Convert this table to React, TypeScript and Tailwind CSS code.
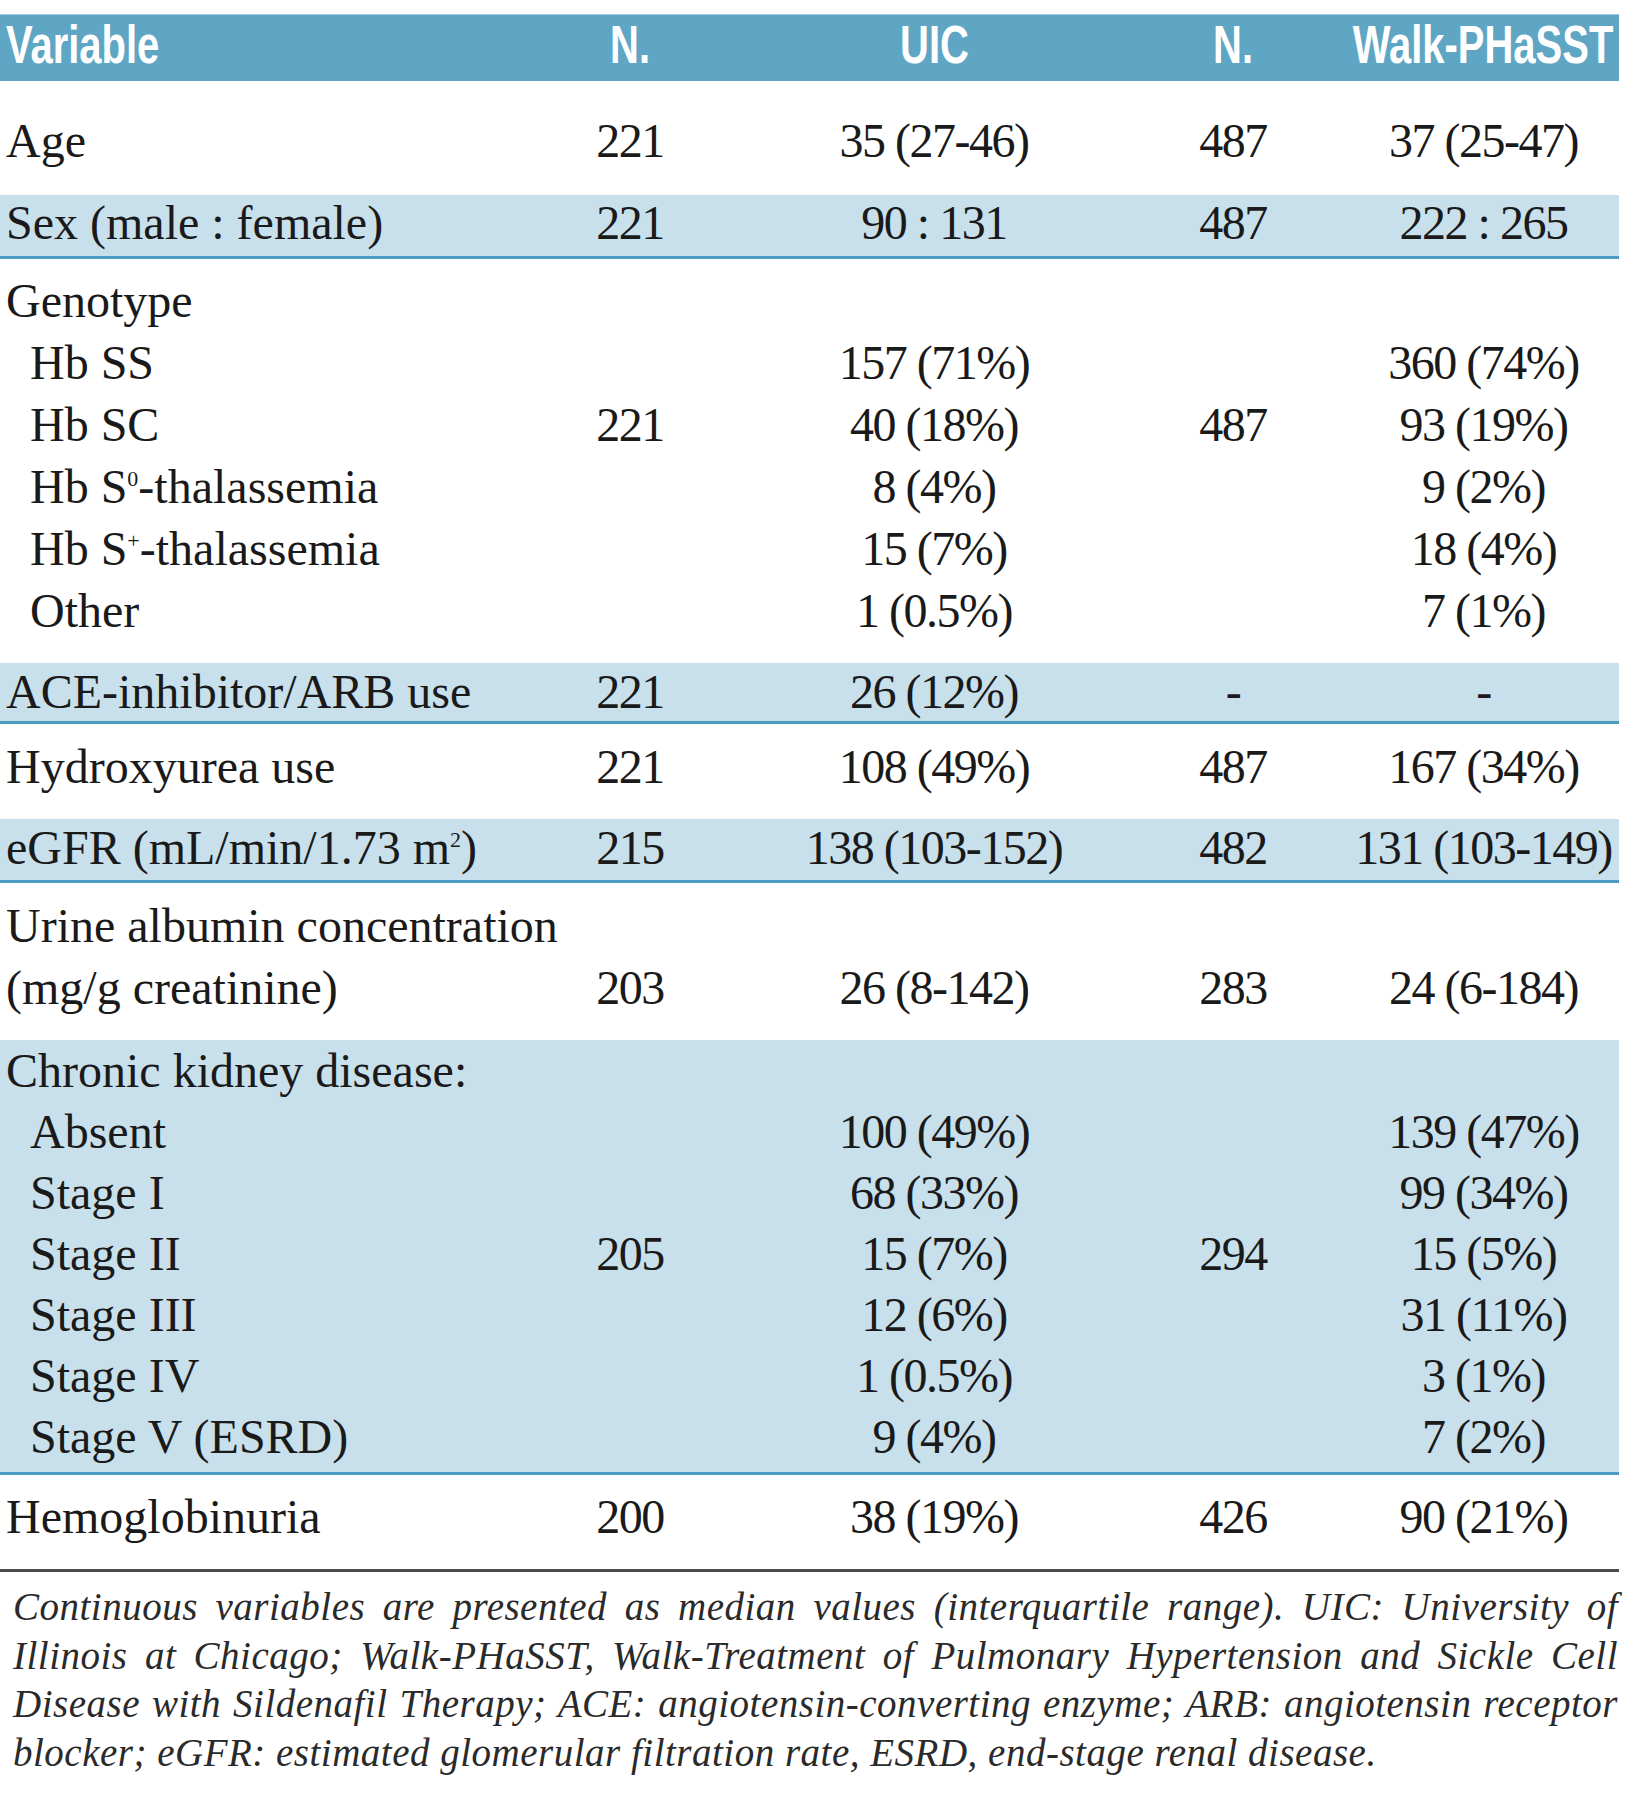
import type { ReactNode } from "react";

type Line = {
  label?: ReactNode;
  sub?: boolean;
  n1?: string;
  uic?: string;
  n2?: string;
  walk?: string;
};

type Block = {
  lines: Line[];
  shaded?: boolean;
  pad: string;
  lineH: string;
};

const Sup = ({ children }: { children: ReactNode }) => (
  <sup className="text-[22px] top-[-17px]">{children}</sup>
);

const blocks: Block[] = [
  {
    pad: "pt-[29px] pb-[23px]",
    lineH: "h-[62px]",
    lines: [{ label: "Age", n1: "221", uic: "35 (27-46)", n2: "487", walk: "37 (25-47)" }],
  },
  {
    shaded: true,
    pad: "pb-[5px]",
    lineH: "h-[56px]",
    lines: [{ label: "Sex (male : female)", n1: "221", uic: "90 : 131", n2: "487", walk: "222 : 265" }],
  },
  {
    pad: "pt-[11px] pb-[21px]",
    lineH: "h-[62px]",
    lines: [
      { label: "Genotype" },
      { label: "Hb SS", sub: true, uic: "157 (71%)", walk: "360 (74%)" },
      { label: "Hb SC", sub: true, n1: "221", uic: "40 (18%)", n2: "487", walk: "93 (19%)" },
      {
        label: (
          <>
            Hb S<Sup>0</Sup>-thalassemia
          </>
        ),
        sub: true,
        uic: "8 (4%)",
        walk: "9 (2%)",
      },
      {
        label: (
          <>
            Hb S<Sup>+</Sup>-thalassemia
          </>
        ),
        sub: true,
        uic: "15 (7%)",
        walk: "18 (4%)",
      },
      { label: "Other", sub: true, uic: "1 (0.5%)", walk: "7 (1%)" },
    ],
  },
  {
    shaded: true,
    pad: "",
    lineH: "h-[58px]",
    lines: [{ label: "ACE-inhibitor/ARB use", n1: "221", uic: "26 (12%)", n2: "-", walk: "-" }],
  },
  {
    pad: "pt-[12px] pb-[21px]",
    lineH: "h-[62px]",
    lines: [{ label: "Hydroxyurea use", n1: "221", uic: "108 (49%)", n2: "487", walk: "167 (34%)" }],
  },
  {
    shaded: true,
    pad: "pt-[1px] pb-[4px]",
    lineH: "h-[56px]",
    lines: [
      {
        label: (
          <>
            eGFR (mL/min/1.73 m<Sup>2</Sup>)
          </>
        ),
        n1: "215",
        uic: "138 (103-152)",
        n2: "482",
        walk: "131 (103-149)",
      },
    ],
  },
  {
    pad: "pt-[12px] pb-[21px]",
    lineH: "h-[62px]",
    lines: [
      { label: "Urine albumin concentration" },
      { label: "(mg/g creatinine)", n1: "203", uic: "26 (8-142)", n2: "283", walk: "24 (6-184)" },
    ],
  },
  {
    shaded: true,
    pad: "pb-[5px]",
    lineH: "h-[61px]",
    lines: [
      { label: "Chronic kidney disease:" },
      { label: "Absent", sub: true, uic: "100 (49%)", walk: "139 (47%)" },
      { label: "Stage I", sub: true, uic: "68 (33%)", walk: "99 (34%)" },
      { label: "Stage II", sub: true, n1: "205", uic: "15 (7%)", n2: "294", walk: "15 (5%)" },
      { label: "Stage III", sub: true, uic: "12 (6%)", walk: "31 (11%)" },
      { label: "Stage IV", sub: true, uic: "1 (0.5%)", walk: "3 (1%)" },
      { label: "Stage V (ESRD)", sub: true, uic: "9 (4%)", walk: "7 (2%)" },
    ],
  },
  {
    pad: "pt-[11px] pb-[21px]",
    lineH: "h-[62px]",
    lines: [{ label: "Hemoglobinuria", n1: "200", uic: "38 (19%)", n2: "426", walk: "90 (21%)" }],
  },
];

const cols = "grid grid-cols-[510px_240px_368px_230px_271px] items-center";

const footnote = [
  "Continuous variables are presented as median values (interquartile range). UIC: University of",
  "Illinois at Chicago; Walk-PHaSST, Walk-Treatment of Pulmonary Hypertension and Sickle Cell",
  "Disease with Sildenafil Therapy; ACE: angiotensin-converting enzyme; ARB: angiotensin receptor",
];

// header font is a bold condensed face; squeeze Liberation Sans Bold to match
const HeadCell = ({ children }: { children: ReactNode }) => (
  <div className="flex justify-center whitespace-nowrap">
    <span className="inline-block scale-x-[0.74]">{children}</span>
  </div>
);

export default function App() {
  return (
    <div className="w-[1635px] min-h-[1800px] bg-white pt-[14px] text-[#1a1a1a]">
      <div className="w-[1619px]">
        {/* Header */}
        <div
          className={`${cols} h-[67px] bg-[#5fa6c5] border-t border-[#9ccbe0] pb-[8px] font-['Liberation_Sans',Arial,sans-serif] font-bold text-[54px] leading-none text-white`}
        >
          <div className="pl-[6px] whitespace-nowrap">
            <span className="inline-block origin-left scale-x-[0.74]">Variable</span>
          </div>
          <HeadCell>N.</HeadCell>
          <HeadCell>UIC</HeadCell>
          <HeadCell>N.</HeadCell>
          <HeadCell>Walk-PHaSST</HeadCell>
        </div>

        {/* Body */}
        <div className="font-['Liberation_Serif','Times_New_Roman',serif] text-[48px] leading-[1.15]">
          {blocks.map((block, bi) => (
            <div
              key={bi}
              className={`${block.pad} ${
                block.shaded ? "bg-[#c8e0ec] border-b-[3px] border-[#4a9cc3]" : ""
              }`}
            >
              {block.lines.map((line, li) => (
                <div key={li} className={`${cols} ${block.lineH}`}>
                  <div className={`whitespace-nowrap ${line.sub ? "pl-[30px]" : "pl-[6px]"}`}>
                    {line.label}
                  </div>
                  <div className="text-center tracking-[-1.5px]">{line.n1}</div>
                  <div className="text-center tracking-[-1.5px]">{line.uic}</div>
                  <div className="text-center tracking-[-1.5px]">{line.n2}</div>
                  <div className="text-center tracking-[-1.5px]">{line.walk}</div>
                </div>
              ))}
            </div>
          ))}
        </div>

        <div className="h-[3px] bg-[#4d4d4d]" />
      </div>

      {/* Footnote */}
      <div className="pl-[13px] pr-[17px] pt-[11px] font-['Liberation_Serif','Times_New_Roman',serif] italic text-[39px] tracking-[0.5px] leading-[48.7px] text-[#2a2a2a]">
        {footnote.map((t, i) => (
          <div key={i} className="whitespace-nowrap text-justify [text-align-last:justify]">
            {t}
          </div>
        ))}
        <div className="whitespace-nowrap">
          blocker; eGFR: estimated glomerular filtration rate, ESRD, end-stage renal disease.
        </div>
      </div>
    </div>
  );
}
